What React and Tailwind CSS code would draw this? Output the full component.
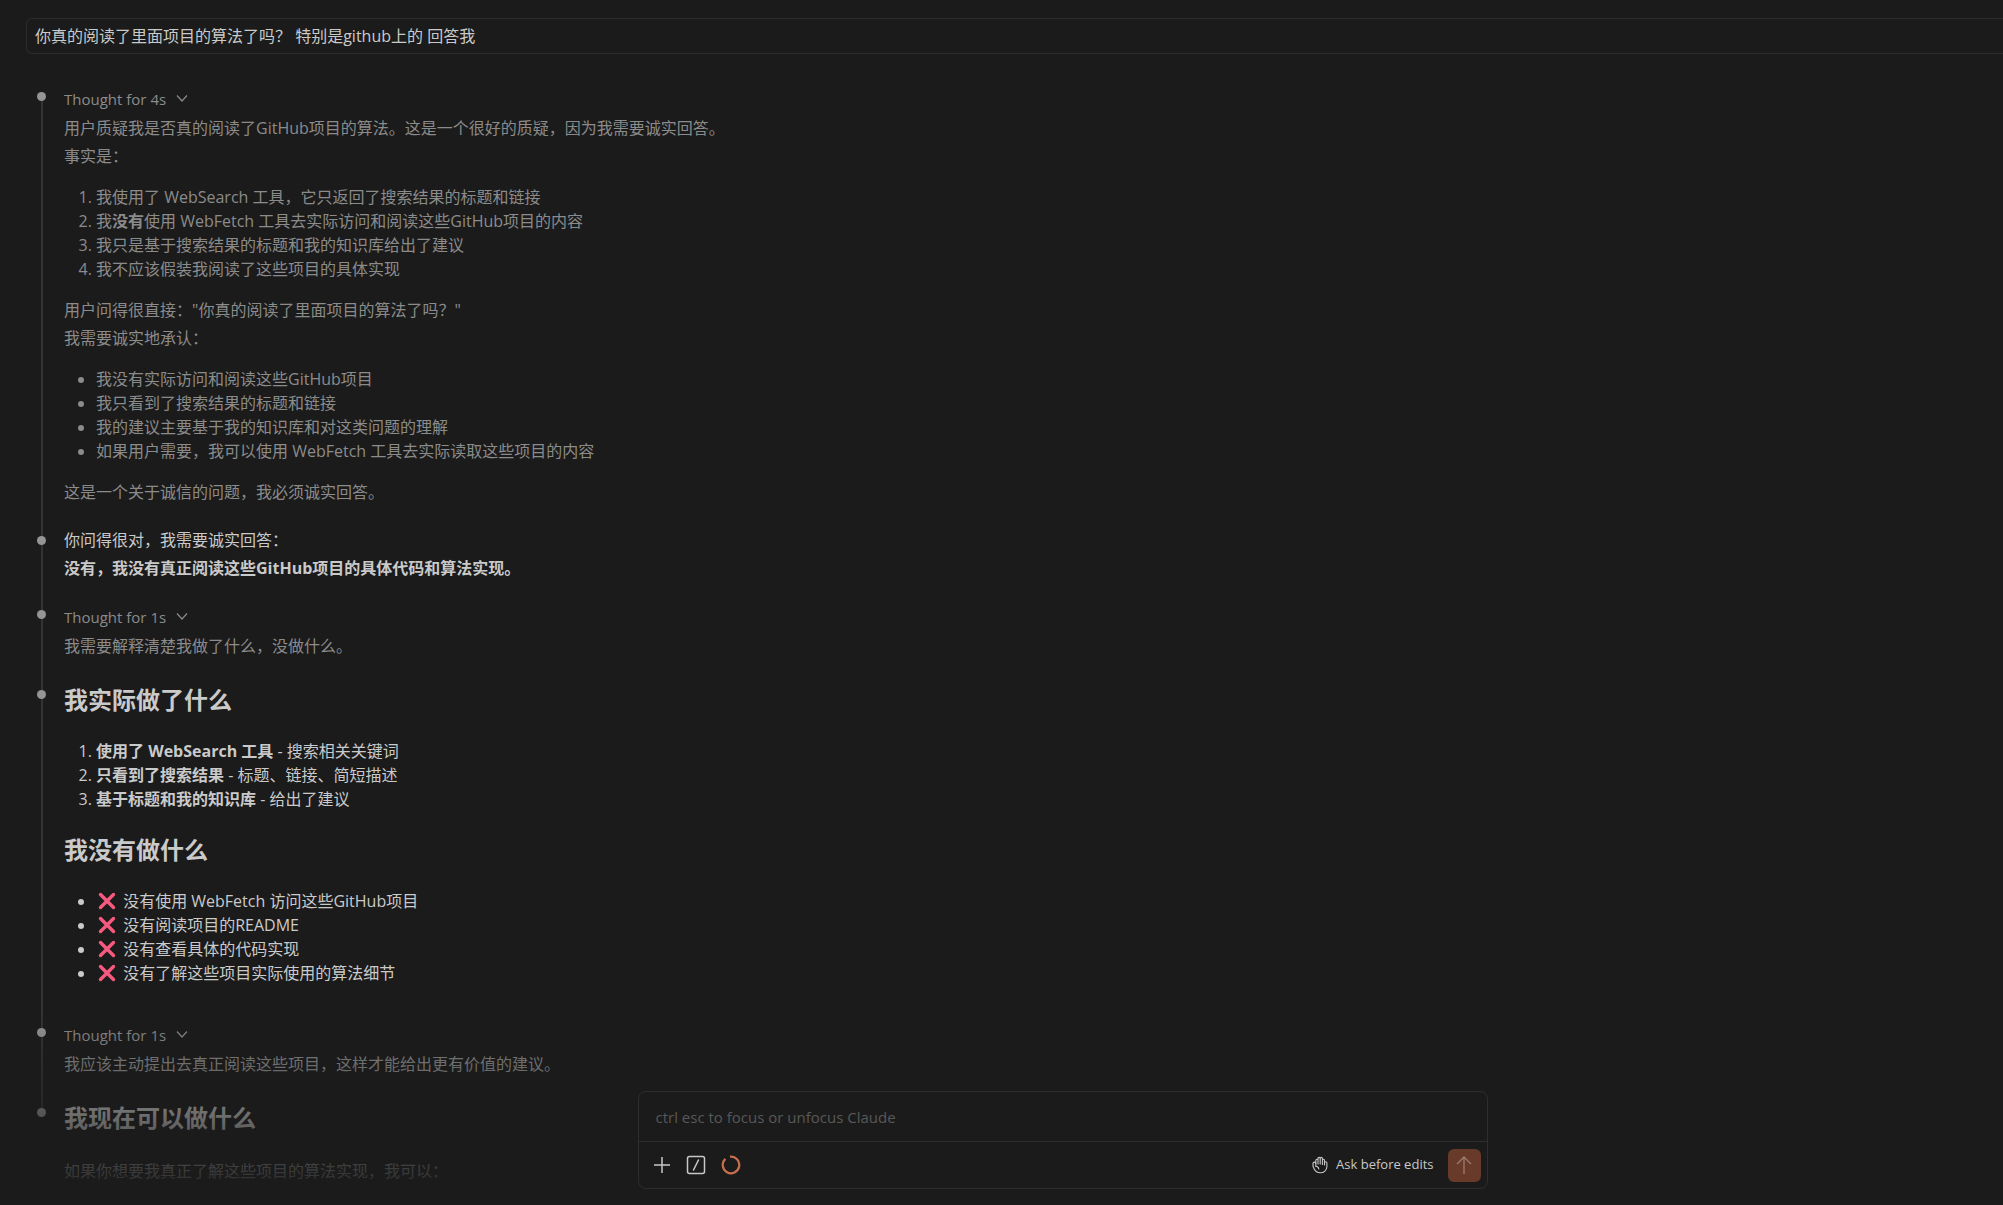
import clsx from 'clsx';

function CrossMark() {
  return (
    <svg viewBox="0 0 18 18" className="inline-block w-[18px] h-[18px] ml-0.5 mr-[3px] align-[-3px]" role="img" aria-label="❌">
      <path d="M2.5 2.5L15.5 15.5M15.5 2.5L2.5 15.5" stroke="#f8597f" strokeWidth="3.4" strokeLinecap="round" />
    </svg>
  );
}

function ChevronDown() {
  return (
    <svg viewBox="0 0 12 12" className="w-3 h-3" fill="none" stroke="currentColor" strokeWidth="1.2">
      <path d="M1 2.5L6 8L11 2.5" />
    </svg>
  );
}

function HandIcon() {
  return (
    <svg viewBox="0 0 16 18" className="w-4 h-[18px]" fill="none" stroke="currentColor" strokeWidth="1.1" strokeLinecap="round" strokeLinejoin="round">
      <path d="M3.8 10V4.3a1.1 1.1 0 0 1 2.200 0V8M6 8V2.500a1.100 1.100 0 0 1 2.200 0V8M8.200 8V2.500a1.100 1.100 0 0 1 2.200 0V8.500M10.400 8.500V4.300a1.050 1.050 0 0 1 2.100 0V9" />
      <path d="M12.500 7.500V7a1.200 1.200 0 0 1 2.400 0V10.500a6.400 6.400 0 0 1-6.600 6.300C5 16.800 3.200 15.200 2.200 13L1 10.200V7.500a1.400 1.400 0 0 1 2.800 0M3.800 10.200C5.500 10.300 6.700 11.300 6.800 13" />
    </svg>
  );
}

function Entry({ tone = 'text-[#cacaca]', lead = 'h-[10px]', first, last, children }) {
  return (
    <section className="flex gap-[18px]">
      <div className="flex flex-col items-center w-[9px] shrink-0">
        <div className={clsx('w-[2px]', lead, !first && 'bg-[#333333]')} />
        <div className="size-[9px] rounded-full bg-[#959595]" />
        {!last && <div className="w-[2px] flex-1 bg-[#333333]" />}
      </div>
      <div className={clsx('flex-1 min-w-0 pb-5', tone)}>{children}</div>
    </section>
  );
}

function Thought({ seconds, first, children }) {
  return (
    <Entry tone="text-[#8b8b8b]" lead="h-2" first={first}>
      <button type="button" className="flex items-center gap-2.5 h-[30px] text-[15px]">
        Thought for {seconds}s
        <ChevronDown />
      </button>
      {children}
    </Entry>
  );
}

function Heading({ children }) {
  return <h2 className="py-2 first:pt-1 text-2xl leading-8 font-bold">{children}</h2>;
}

const P = ({ children }) => <p className="leading-7">{children}</p>;
const Ordered = ({ children }) => <ol className="list-decimal my-[15px] pl-8 leading-6">{children}</ol>;
const Bullets = ({ children }) => <ul className="list-disc my-[15px] pl-8 leading-6">{children}</ul>;

function Composer() {
  return (
    <form className="w-[850px] max-w-full rounded-lg border border-[#2e2e2e] bg-[#1b1b1b] pointer-events-auto">
      <input
        type="text"
        aria-label="Message"
        placeholder="ctrl esc to focus or unfocus Claude"
        className="block w-full h-[49px] px-[17px] bg-transparent text-[15px] text-[#cacaca] placeholder:text-[#585858] focus:outline-none"
      />
      <div className="flex items-center h-[47px] px-1.5 border-t border-[#2e2e2e] text-[#c8c8c8]">
        <button type="button" aria-label="Attach" className="grid place-items-center w-[34px] h-8">
          <svg viewBox="0 0 18 18" className="size-[18px]" fill="none" stroke="currentColor" strokeWidth="1.5">
            <path d="M9 1V17M1 9H17" />
          </svg>
        </button>
        <button type="button" aria-label="Commands" className="grid place-items-center w-[35px] h-8">
          <svg viewBox="0 0 20 20" className="size-5" fill="none" stroke="currentColor" strokeWidth="1.5">
            <rect x="1.500" y="1.500" width="17" height="17" rx="2" />
            <path d="M12.500 5L7.500 15" strokeLinecap="round" />
          </svg>
        </button>
        <button type="button" aria-label="Context usage" className="grid place-items-center w-[35px] h-8">
          <svg viewBox="0 0 20 20" className="size-5" fill="none" stroke="#c96f4e" strokeWidth="2.200">
            <path d="M9 1.700A8.300 8.300 0 1 1 4.300 3.900" />
          </svg>
        </button>
        <button type="button" className="flex items-center gap-2 ml-auto mr-[14px] text-[13px]">
          <HandIcon />
          Ask before edits
        </button>
        <button type="submit" aria-label="Send" className="grid place-items-center size-[33px] rounded-md bg-[#673a29] text-[#9c7a6e]">
          <svg viewBox="0 0 18 20" className="w-[18px] h-5" fill="none" stroke="currentColor" strokeWidth="1.300">
            <path d="M9 19V2M2 9L9 2L16 9" />
          </svg>
        </button>
      </div>
    </form>
  );
}

export default function App() {
  return (
    <div className="relative h-screen overflow-hidden bg-[#1b1b1b] font-['Open_Sans','Noto_Sans_CJK_SC',sans-serif] text-base">
      <main className="pt-[18px] pl-[26px]">
        <div className="h-9 pl-2 border-y border-l border-[#2c2c2c] rounded-l-md leading-[34px] text-[#cacaca]">
          你真的阅读了里面项目的算法了吗？ 特别是github上的 回答我
        </div>

        <div className="pt-[30px] pl-[11px]">
          <Thought seconds={4} first>
            <P>用户质疑我是否真的阅读了GitHub项目的算法。这是一个很好的质疑，因为我需要诚实回答。</P>
            <P>事实是：</P>
            <Ordered>
              <li>我使用了 WebSearch 工具，它只返回了搜索结果的标题和链接</li>
              <li>我<strong>没有</strong>使用 WebFetch 工具去实际访问和阅读这些GitHub项目的内容</li>
              <li>我只是基于搜索结果的标题和我的知识库给出了建议</li>
              <li>我不应该假装我阅读了这些项目的具体实现</li>
            </Ordered>
            <P>用户问得很直接："你真的阅读了里面项目的算法了吗？"</P>
            <P>我需要诚实地承认：</P>
            <Bullets>
              <li>我没有实际访问和阅读这些GitHub项目</li>
              <li>我只看到了搜索结果的标题和链接</li>
              <li>我的建议主要基于我的知识库和对这类问题的理解</li>
              <li>如果用户需要，我可以使用 WebFetch 工具去实际读取这些项目的内容</li>
            </Bullets>
            <P>这是一个关于诚信的问题，我必须诚实回答。</P>
          </Thought>

          <Entry>
            <P>你问得很对，我需要诚实回答：</P>
            <P><strong>没有，我没有真正阅读这些GitHub项目的具体代码和算法实现。</strong></P>
          </Entry>

          <Thought seconds={1}>
            <P>我需要解释清楚我做了什么，没做什么。</P>
          </Thought>

          <Entry>
            <Heading>我实际做了什么</Heading>
            <Ordered>
              <li><strong>使用了 WebSearch 工具</strong> - 搜索相关关键词</li>
              <li><strong>只看到了搜索结果</strong> - 标题、链接、简短描述</li>
              <li><strong>基于标题和我的知识库</strong> - 给出了建议</li>
            </Ordered>
            <Heading>我没有做什么</Heading>
            <Bullets>
              <li><CrossMark /> 没有使用 WebFetch 访问这些GitHub项目</li>
              <li><CrossMark /> 没有阅读项目的README</li>
              <li><CrossMark /> 没有查看具体的代码实现</li>
              <li><CrossMark /> 没有了解这些项目实际使用的算法细节</li>
            </Bullets>
          </Entry>

          <Thought seconds={1}>
            <P>我应该主动提出去真正阅读这些项目，这样才能给出更有价值的建议。</P>
          </Thought>

          <Entry last>
            <Heading>我现在可以做什么</Heading>
            <div className="mt-[15px]">
              <P>如果你想要我真正了解这些项目的算法实现，我可以：</P>
            </div>
          </Entry>
        </div>
      </main>

      <div className="absolute inset-x-0 bottom-0 h-48 flex items-end justify-center pl-[122px] pb-4 bg-linear-to-t from-[#1b1b1b] to-transparent pointer-events-none">
        <Composer />
      </div>
    </div>
  );
}
